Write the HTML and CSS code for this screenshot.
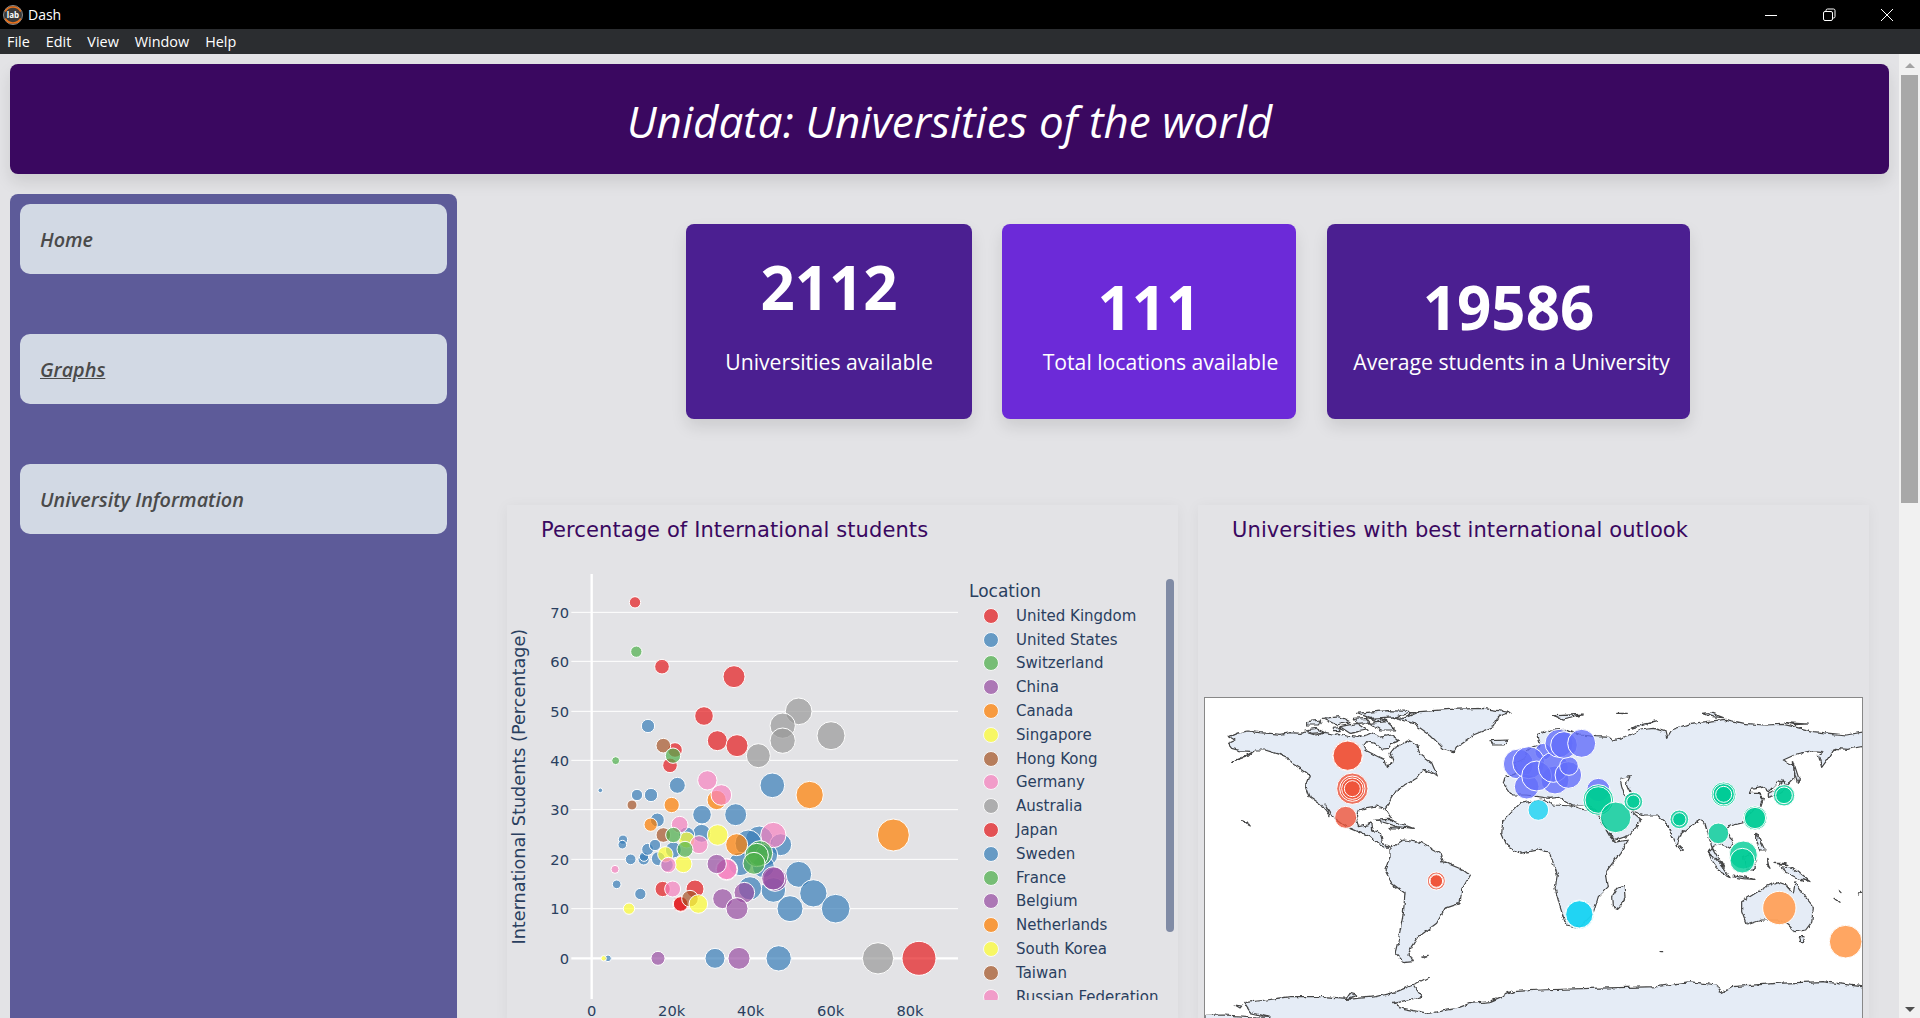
FILE: index.html
```html
<!DOCTYPE html>
<html lang="en">
<head>
    <meta charset="UTF-8">
    <meta name="viewport" content="width=device-width, initial-scale=1.0">
    <title>Dash</title>
    <link rel="stylesheet" href="styles.css">
</head>
<body>

    <div class="titleBar">
        <svg class="appLogo" width="20" height="20" viewBox="0 0 20 20">
            <circle cx="10" cy="10" r="9.5" fill="#3a3a3a" stroke="#8a8a8a"/>
            <path d="M2.2 6.5a9 9 0 0 1 15.6 0" fill="none" stroke="#e8701a" stroke-width="1.6"/>
            <path d="M2.2 13.5a9 9 0 0 0 15.6 0" fill="none" stroke="#e8701a" stroke-width="1.6"/>
            <text class="appLogoText" x="10" y="12.5">lab</text>
        </svg>
        <span class="appName">Dash</span>
        <div class="windowButtons">
            <svg width="14" height="14" viewBox="0 0 14 14"><path d="M1 7.5h12" stroke="#fff" fill="none"/></svg>
            <svg width="14" height="14" viewBox="0 0 14 14"><rect x="1.5" y="3.5" width="9" height="9" rx="1.5" stroke="#fff" fill="none"/><path d="M4 3.5v-1a1.5 1.5 0 0 1 1.5-1.5h6a1.5 1.5 0 0 1 1.5 1.5v6a1.5 1.5 0 0 1-1.5 1.5h-1" stroke="#fff" fill="none"/></svg>
            <svg width="14" height="14" viewBox="0 0 14 14"><path d="M1 1l12 12M13 1L1 13" stroke="#fff" fill="none"/></svg>
        </div>
    </div>

    <div class="menuBar">
        <span>File</span><span>Edit</span><span>View</span><span>Window</span><span>Help</span>
    </div>

    <div class="pageArea">
        <div class="page">
            <header class="pageHeader">
                <h1>Unidata: Universities of the world</h1>
            </header>

            <div class="pageBody">
                <nav class="sideBar">
                    <a class="navItem">Home</a>
                    <a class="navItem navItemActive">Graphs</a>
                    <a class="navItem">University Information</a>
                </nav>

                <main class="content">
                    <div class="statRow">
                        <div class="statCard statCardFirst">
                            <div class="statNumber statNumberRaised">2112</div>
                            <div class="statLabel">Universities available</div>
                        </div>
                        <div class="statCard statCardBright statCardSecond">
                            <div class="statNumber">111</div>
                            <div class="statLabel statLabelShifted">Total locations available</div>
                        </div>
                        <div class="statCard statCardThird">
                            <div class="statNumber">19586</div>
                            <div class="statLabel statLabelNudged">Average students in a University</div>
                        </div>
                    </div>

                    <div class="chartRow">
                        <section class="chartPanel">
                            <h3 class="chartTitle">Percentage of International students</h3>
                            <div class="scatterBody">
                                <svg class="scatter" width="453" height="463" viewBox="21 165 1359 1389">
                                    <g class="grid">
                                        <path d="M214 337H1374M214 484H1374M214 634H1374M214 781H1374M214 929H1374M214 1078H1374M214 1226H1374"/>
                                        <path class="zeroLine" d="M214 1375H1374M275 222V1497"/>
                                    </g>
                                    <g class="ticks">
                                        <text class="tickY" x="207" y="353">70</text>
                                        <text class="tickY" x="207" y="500">60</text>
                                        <text class="tickY" x="207" y="650">50</text>
                                        <text class="tickY" x="207" y="797">40</text>
                                        <text class="tickY" x="207" y="945">30</text>
                                        <text class="tickY" x="207" y="1094">20</text>
                                        <text class="tickY" x="207" y="1242">10</text>
                                        <text class="tickY" x="207" y="1391">0</text>
                                        <text class="tickX" x="275" y="1547">0</text>
                                        <text class="tickX" x="515" y="1547">20k</text>
                                        <text class="tickX" x="752" y="1547">40k</text>
                                        <text class="tickX" x="992" y="1547">60k</text>
                                        <text class="tickX" x="1230" y="1547">80k</text>
                                    </g>
                                    <text class="axisTitle" transform="translate(75 860) rotate(-90)">International Students (Percentage)</text>

                                    <g class="dots dotBlue">
                                        <circle cx="444" cy="678" r="20"/><circle cx="301" cy="871" r="7"/><circle cx="411" cy="885" r="17"/><circle cx="453" cy="885" r="20"/>
                                        <circle cx="532" cy="856" r="24"/><circle cx="817" cy="856" r="37"/><circle cx="472" cy="960" r="21"/><circle cx="606" cy="944" r="28"/>
                                        <circle cx="707" cy="944" r="33"/><circle cx="369" cy="1019" r="14"/><circle cx="367" cy="1034" r="13"/><circle cx="392" cy="1078" r="16"/>
                                        <circle cx="431" cy="1078" r="17"/><circle cx="432" cy="1070" r="14"/><circle cx="443" cy="1048" r="18"/><circle cx="465" cy="1035" r="17"/>
                                        <circle cx="475" cy="1076" r="21"/><circle cx="350" cy="1153" r="13"/><circle cx="421" cy="1182" r="17"/><circle cx="605" cy="1000" r="27"/>
                                        <circle cx="520" cy="1050" r="24"/><circle cx="560" cy="1005" r="24"/><circle cx="778" cy="1020" r="42"/><circle cx="745" cy="1030" r="40"/>
                                        <circle cx="842" cy="1034" r="33"/><circle cx="800" cy="1065" r="33"/><circle cx="720" cy="1092" r="35"/><circle cx="790" cy="1100" r="33"/>
                                        <circle cx="896" cy="1123" r="39"/><circle cx="940" cy="1180" r="41"/><circle cx="870" cy="1226" r="39"/><circle cx="1007" cy="1226" r="43"/>
                                        <circle cx="820" cy="1170" r="37"/><circle cx="750" cy="1165" r="35"/><circle cx="645" cy="1375" r="30"/><circle cx="836" cy="1375" r="38"/>
                                        <circle cx="324" cy="1375" r="10"/><circle cx="500" cy="1095" r="20"/>
                                    </g>
                                    <g class="dots dotGray">
                                        <circle cx="896" cy="634" r="40"/><circle cx="848" cy="677" r="38"/><circle cx="848" cy="722" r="38"/><circle cx="993" cy="707" r="42"/>
                                        <circle cx="775" cy="767" r="36"/><circle cx="1134" cy="1375" r="47"/>
                                    </g>
                                    <g class="dots dotRed">
                                        <circle cx="405" cy="307" r="17"/><circle cx="486" cy="500" r="22"/><circle cx="702" cy="530" r="33"/><circle cx="612" cy="648" r="28"/>
                                        <circle cx="652" cy="722" r="30"/><circle cx="711" cy="737" r="33"/><circle cx="525" cy="750" r="22"/><circle cx="510" cy="796" r="22"/>
                                        <circle cx="488" cy="1167" r="23"/><circle cx="585" cy="1167" r="27"/><circle cx="542" cy="1212" r="24"/><circle cx="542" cy="1212" r="22"/>
                                        <circle cx="1257" cy="1375" r="51"/>
                                    </g>
                                    <g class="dots dotOrange">
                                        <circle cx="929" cy="885" r="41"/><circle cx="1180" cy="1005" r="48"/><circle cx="650" cy="900" r="29"/><circle cx="515" cy="915" r="23"/>
                                        <circle cx="452" cy="974" r="20"/><circle cx="710" cy="1034" r="33"/>
                                    </g>
                                    <g class="dots dotBrown">
                                        <circle cx="490" cy="737" r="22"/><circle cx="396" cy="915" r="15"/><circle cx="490" cy="1005" r="22"/><circle cx="570" cy="1196" r="25"/>
                                    </g>
                                    <g class="dots dotYellow">
                                        <circle cx="653" cy="1005" r="31"/><circle cx="550" cy="1092" r="26"/><circle cx="496" cy="1063" r="23"/><circle cx="560" cy="1020" r="24"/>
                                        <circle cx="387" cy="1226" r="17"/><circle cx="595" cy="1212" r="28"/><circle cx="311" cy="1375" r="8"/>
                                    </g>
                                    <g class="dots dotPink">
                                        <circle cx="622" cy="841" r="29"/><circle cx="664" cy="885" r="31"/><circle cx="539" cy="974" r="25"/><circle cx="597" cy="1034" r="27"/>
                                        <circle cx="820" cy="1005" r="38"/><circle cx="345" cy="1108" r="12"/><circle cx="505" cy="1095" r="23"/><circle cx="518" cy="1167" r="24"/>
                                        <circle cx="680" cy="1108" r="33"/><circle cx="680" cy="1108" r="31"/>
                                    </g>
                                    <g class="dots dotPurple">
                                        <circle cx="474" cy="1375" r="21"/><circle cx="717" cy="1375" r="33"/><circle cx="650" cy="1092" r="29"/><circle cx="668" cy="1196" r="30"/>
                                        <circle cx="733" cy="1178" r="31"/><circle cx="711" cy="1226" r="33"/><circle cx="825" cy="1138" r="36"/><circle cx="820" cy="1135" r="35"/>
                                    </g>
                                    <g class="dots dotGreen">
                                        <circle cx="409" cy="455" r="17"/><circle cx="347" cy="782" r="12"/><circle cx="519" cy="767" r="23"/><circle cx="520" cy="1005" r="23"/>
                                        <circle cx="555" cy="1048" r="24"/><circle cx="780" cy="1060" r="38"/><circle cx="770" cy="1065" r="35"/><circle cx="762" cy="1090" r="33"/>
                                    </g>
                                </svg>
                                <div class="legend">
                                    <div class="legendTitle">Location</div>
                                    <ul class="legendList">
                                        <li><i class="swatch dotRed"></i>United Kingdom</li>
                                        <li><i class="swatch dotBlue"></i>United States</li>
                                        <li><i class="swatch dotGreen"></i>Switzerland</li>
                                        <li><i class="swatch dotPurple"></i>China</li>
                                        <li><i class="swatch dotOrange"></i>Canada</li>
                                        <li><i class="swatch dotYellow"></i>Singapore</li>
                                        <li><i class="swatch dotBrown"></i>Hong Kong</li>
                                        <li><i class="swatch dotPink"></i>Germany</li>
                                        <li><i class="swatch dotGray"></i>Australia</li>
                                        <li><i class="swatch dotRed"></i>Japan</li>
                                        <li><i class="swatch dotBlue"></i>Sweden</li>
                                        <li><i class="swatch dotGreen"></i>France</li>
                                        <li><i class="swatch dotPurple"></i>Belgium</li>
                                        <li><i class="swatch dotOrange"></i>Netherlands</li>
                                        <li><i class="swatch dotYellow"></i>South Korea</li>
                                        <li><i class="swatch dotBrown"></i>Taiwan</li>
                                        <li><i class="swatch dotPink"></i>Russian Federation</li>
                                    </ul>
                                    <div class="legendScroll"></div>
                                </div>
                            </div>
                        </section>

                        <section class="chartPanel chartPanelMap">
                            <h3 class="chartTitle">Universities with best international outlook</h3>
                            <div class="mapFrame">
                                <svg class="map" width="657" height="320" viewBox="45 54 1971 960">
                                    <defs>
                                        <filter id="rough" x="-5%" y="-5%" width="110%" height="110%">
                                            <feTurbulence type="fractalNoise" baseFrequency="0.05" numOctaves="3" seed="4"/>
                                            <feDisplacementMap in="SourceGraphic" scale="14" xChannelSelector="R" yChannelSelector="G"/>
                                        </filter>
                                    </defs>
                                    <g filter="url(#rough)">
                                    <g class="land">
                                        <!-- americas -->
                                        <path d="M118 170L140 160 175 153 205 158 240 160 270 163 300 158 335 160 345 156 375 165 400 160 430 165 445 160 470 168 500 172 530 165 545 158 570 172 600 165 625 182 605 190 595 205 575 207 555 190 530 185 522 195 530 212 560 228 585 240 592 262 610 245 600 220 612 205 640 190 655 180 680 195 690 222 725 248 742 288 715 275 700 268 680 295 640 318 620 330 605 355 585 385 605 415 585 385 560 378 530 383 505 390 497 415 505 440 530 435 545 428 548 450 570 458 578 490 600 500 585 503 570 495 540 470 505 455 470 440 430 412 405 372 420 410 395 375 360 350 347 315 358 285 335 268 305 250 295 235 265 222 225 210 195 210 175 228 125 245 165 228 190 215 150 212 125 205 113 190 135 180Z"/>
                                        <path d="M600 505L640 480 695 488 750 520 760 545 820 570 840 585 815 630 810 670 765 685 740 730 700 760 680 775 655 815 670 845 640 848 615 820 625 780 640 700 645 640 605 610 585 570 600 530Z"/>
                                        <path d="M600 110L640 115 690 95 780 88 880 85 960 97 925 110 910 140 850 165 800 200 790 215 760 205 720 165 670 130Z"/>
                                        <path d="M350 125L395 120 385 135 350 135ZM400 115L450 110 480 125 440 135ZM500 100L590 92 680 95 620 110 540 115ZM540 130L590 125 620 150 570 150ZM450 140L500 130 530 150 480 160ZM345 150L380 145 405 157 365 160ZM490 118L530 115 540 128 500 130ZM545 118L570 115 590 122 560 126ZM430 145L455 142 450 152 432 152Z"/>
                                        <path d="M555 420L600 418 635 432 670 445 620 440ZM600 442L625 441 625 447 605 447ZM155 422L173 428 181 438 166 430ZM135 975L155 978 150 984ZM695 828L715 826 705 832Z"/>
                                        <path d="M900 182L955 180 945 195 910 195ZM1090 108L1180 102 1120 120Z"/>
                                        <!-- antarctica -->
                                        <path d="M45 1006L100 1005 180 1010 240 1012 180 998 160 968 230 960 300 950 400 950 470 955 480 940 500 945 470 958 560 950 620 935 680 910 715 892 670 915 695 950 610 970 640 985 715 1000 800 985 840 970 900 965 970 935 1050 930 1200 925 1400 920 1500 905 1580 915 1595 940 1630 920 1760 910 1900 905 2050 925 2150 935 2150 1030 45 1030Z"/>
                                    </g>
                                    <g class="land" transform="translate(1020 0)">
                                        <!-- africa -->
                                        <path d="M-85 460L-82 425-30 370 30 360 60 365 70 375 130 378 165 390 190 388 205 410 240 470 255 487 295 480 270 520 228 575 235 620 205 650 190 700 150 742 108 735 90 680 75 625 82 585 60 520 30 508-30 520-70 495Z"/>
                                        <!-- eurasia -->
                                        <path d="M-55 345L-80 310-75 290-40 280-45 250-15 235-5 205 30 195 20 165 60 150 110 148 150 165 200 170 240 172 250 180 285 170 300 165 330 150 370 145 405 155 410 175 425 150 480 130 530 125 585 118 640 130 700 135 760 133 790 140 850 155 900 160 950 165 1005 155 1005 198 950 208 915 205 895 235 875 262 865 225 880 215 850 212 800 222 760 240 790 255 795 290 770 315 745 305 715 335 695 320 665 325 658 340 685 340 700 355 690 385 675 385 640 425 600 435 590 450 610 490 600 505 575 490 555 495 535 515 580 560 545 500 525 430 510 420 480 440 455 460 440 500 410 430 385 405 340 405 300 390 335 420 300 465 252 482 225 440 205 400 175 375 125 375 85 352 60 355-15 345Z"/>
                                        <!-- islands -->
                                        <path d="M250 680L248 650 263 625 285 615 288 650 273 675 263 685ZM450 497L460 507 455 512 448 505ZM790 245L808 300 803 310 793 275ZM715 340L745 325 760 300 768 325 733 350 715 355ZM680 460L690 480 705 510 690 510 680 485Z"/>
                                        <path d="M535 515L570 550 600 590 570 575 545 540ZM610 585L640 590 675 598 640 596 610 591ZM640 530L660 520 680 540 670 570 650 570ZM710 535L715 555 720 565 710 555ZM735 550L760 550 775 555ZM750 560L790 565 840 605 800 595 770 580Z"/>
                                        <path d="M635 665L700 625 740 605 770 615 790 640 795 605 825 650 850 680 845 730 830 750 795 755 775 735 745 720 695 720 650 735 635 695ZM805 770L825 770 820 785 810 785Z"/>
                                        <path d="M295 150L335 130 385 122 350 132 315 144ZM70 107L160 105 100 120ZM260 100L292 100 277 104ZM515 100L540 98 580 113 545 110ZM765 128L800 130 835 132 795 134Z"/>
                                        <path d="M925 630L933 638ZM912 655L927 667ZM985 642L995 637ZM390 815L398 815Z"/>
                                    </g>
                                    <g class="lake" transform="translate(1020 0)">
                                        <path d="M270 295L300 290 290 310 305 345 285 350 275 320Z"/>
                                    </g>
                                    </g>

                                    <g class="bubbles bubbleBlue">
                                        <circle cx="1225" cy="330" r="35"/><circle cx="1060" cy="215" r="25"/><circle cx="985" cy="252" r="45"/><circle cx="1010" cy="320" r="37"/>
                                        <circle cx="1016" cy="248" r="48"/><circle cx="1095" cy="300" r="42"/><circle cx="1040" cy="288" r="45"/><circle cx="1090" cy="262" r="45"/>
                                        <circle cx="1135" cy="285" r="40"/><circle cx="1137" cy="258" r="28"/><circle cx="1107" cy="190" r="42"/><circle cx="1122" cy="195" r="40"/>
                                        <circle cx="1175" cy="190" r="42"/>
                                    </g>
                                    <g class="bubbles bubbleRed">
                                        <circle cx="473" cy="227" r="46"/><circle cx="473" cy="227" r="44"/><circle cx="487" cy="326" r="47"/><circle cx="487" cy="326" r="38"/>
                                        <circle cx="487" cy="326" r="32"/><circle cx="487" cy="326" r="24"/><circle cx="739" cy="603" r="27"/><circle cx="739" cy="603" r="21"/>
                                        <circle cx="739" cy="603" r="19"/><circle cx="467" cy="412" r="33"/>
                                    </g>
                                    <g class="bubbles bubbleCyan">
                                        <circle cx="1045" cy="390" r="31"/><circle cx="1168" cy="703" r="43"/><circle cx="1168" cy="703" r="41"/>
                                    </g>
                                    <g class="bubbles bubbleGreen" transform="translate(1020 0)">
                                        <circle cx="205" cy="360" r="46"/><circle cx="205" cy="360" r="40"/><circle cx="257" cy="412" r="46"/><circle cx="310" cy="365" r="28"/>
                                        <circle cx="310" cy="365" r="20"/><circle cx="448" cy="418" r="28"/><circle cx="448" cy="418" r="20"/><circle cx="581" cy="343" r="37"/>
                                        <circle cx="581" cy="343" r="32"/><circle cx="581" cy="343" r="24"/><circle cx="565" cy="460" r="31"/><circle cx="675" cy="414" r="36"/>
                                        <circle cx="675" cy="414" r="32"/><circle cx="762" cy="346" r="32"/><circle cx="762" cy="346" r="25"/><circle cx="640" cy="525" r="42"/>
                                        <circle cx="637" cy="542" r="37"/>
                                    </g>
                                    <g class="bubbles bubbleOrange" transform="translate(1020 0)">
                                        <circle cx="748" cy="684" r="50"/><circle cx="947" cy="785" r="49"/>
                                    </g>
                                </svg>
                            </div>
                        </section>
                    </div>
                </main>
            </div>
        </div>

        <div class="scrollBar">
            <i class="arrowUp"></i>
            <div class="scrollThumb"></div>
            <i class="arrowDown"></i>
        </div>
    </div>

</body>
</html>
```

FILE: styles.css
```css
* {
    box-sizing: border-box;
}

html, body {
    height: 100%;
}

body {
    font-family: 'Open Sans', 'Noto Sans', sans-serif;
    margin: 0;
    padding: 0;
    background-color: #E3E3E6;
    overflow: hidden;
    display: flex;
    flex-direction: column;
}

/* Barra da janela */
.titleBar {
    height: 29px;
    flex: none;
    background-color: #000;
    color: #fff;
    display: flex;
    align-items: center;
    padding-left: 3px;
    font-size: 14px;
}

.appLogo {
    margin-right: 5px;
}

.appLogoText {
    font-family: 'Open Sans', sans-serif;
    font-size: 8px;
    font-weight: 700;
    fill: #fff;
    text-anchor: middle;
}

.windowButtons {
    margin-left: auto;
    display: flex;
    gap: 44px;
    padding-right: 26px;
}

.menuBar {
    height: 25px;
    flex: none;
    background-color: #2B2D30;
    color: #fff;
    display: flex;
    align-items: center;
    gap: 16px;
    padding-left: 7px;
    font-size: 14.4px;
}

.pageArea {
    flex: 1;
    min-height: 0;
    display: flex;
}

.page {
    flex: 1;
    min-width: 0;
    display: flex;
    flex-direction: column;
    padding: 10px 10px 0 10px;
    overflow: hidden;
}

.pageHeader {
    height: 110px;
    flex: none;
    background-color: #3A0860;
    border-radius: 8px;
    box-shadow: 0 8px 16px rgba(0, 0, 0, 0.1);
    color: #fff;
    display: flex;
    align-items: center;
    justify-content: center;
}

.pageHeader h1 {
    margin: 4px 0 0 0;
    font-size: 44px;
    font-weight: 400;
    font-style: italic;
}

.pageBody {
    flex: 1;
    min-height: 0;
    display: flex;
    margin-top: 20px;
}

.sideBar {
    width: 447px;
    flex: none;
    background-color: #5D5B99;
    border-radius: 8px 8px 0 0;
    padding: 10px;
    display: flex;
    flex-direction: column;
    gap: 60px;
}

.navItem {
    height: 70px;
    background-color: #D2D9E4;
    border-radius: 10px;
    color: #4A4A4A;
    font-size: 19.8px;
    font-style: italic;
    font-weight: 600;
    display: flex;
    align-items: center;
    padding-left: 20px;
}

.navItemActive {
    text-decoration: underline;
}

.content {
    flex: 1;
    min-width: 0;
    padding: 30px 19px 0 50px;
}

.statRow {
    display: flex;
    justify-content: center;
    gap: 30px;
    padding-right: 1px;
}

.statCard {
    height: 195px;
    background-color: #4B1F91;
    border-radius: 8px;
    box-shadow: 0 8px 16px rgba(0, 0, 0, 0.1);
    color: #fff;
    text-align: center;
    display: flex;
    flex-direction: column;
    align-items: center;
    padding-top: 30px;
}

.statCardFirst {
    width: 286px;
}

.statCardSecond {
    width: 294px;
}

.statCardThird {
    width: 363px;
    margin-left: 1px;
}

.statCardBright {
    background-color: #6C2AD8;
}

.statNumber {
    font-size: 60px;
    font-weight: 700;
    line-height: 80px;
    margin-top: 13px;
}

.statNumberRaised {
    margin-top: -7px;
    margin-bottom: 20px;
}

.statLabel {
    font-size: 21.2px;
    line-height: 30px;
    white-space: nowrap;
}

.statLabelShifted {
    margin-left: 23px;
}

.statLabelNudged {
    margin-left: 6px;
}

.chartRow {
    display: flex;
    gap: 20px;
    margin-top: 86px;
}

.chartPanel {
    width: 671px;
    height: 520px;
    flex: none;
    background-color: #E3E3E6;
    box-shadow: 0 2px 14px rgba(0, 0, 0, 0.05);
    padding-top: 13px;
}

.chartTitle {
    margin: 0 0 0 34px;
    height: 37px;
    font-family: 'DejaVu Sans', sans-serif;
    font-size: 21px;
    font-weight: 400;
    letter-spacing: 0.1px;
    line-height: 24px;
    color: #3A0860;
    white-space: nowrap;
}

.scatterBody {
    display: flex;
}

.scatter {
    flex: none;
}

.grid path {
    stroke: #fff;
    stroke-width: 3;
    fill: none;
}

.grid .zeroLine {
    stroke-width: 7;
}

.ticks text,
.axisTitle {
    font-family: 'DejaVu Sans', sans-serif;
    fill: #2A3F5F;
}

.ticks text {
    font-size: 44px;
}

.tickY {
    text-anchor: end;
}

.tickX {
    text-anchor: middle;
}

.axisTitle {
    font-size: 53px;
    text-anchor: middle;
}

.dots circle {
    stroke: #fff;
    stroke-width: 3;
    fill-opacity: 0.7;
}

.dots.dotRed circle { fill: #E41A1C; }
.dots.dotBlue circle { fill: #377EB8; }
.dots.dotGreen circle { fill: #4DAF4A; }
.dots.dotPurple circle { fill: #984EA3; }
.dots.dotOrange circle { fill: #FF7F00; }
.dots.dotYellow circle { fill: #FFFF33; }
.dots.dotBrown circle { fill: #A65628; }
.dots.dotPink circle { fill: #F781BF; }
.dots.dotGray circle { fill: #999999; }

.legend {
    flex: 1;
    position: relative;
    font-family: 'DejaVu Sans', sans-serif;
    color: #2A3F5F;
    margin-top: 0;
}

.legendTitle {
    font-size: 17px;
    line-height: 20px;
    margin-top: 26px;
    margin-left: 9px;
}

.legendList {
    list-style: none;
    margin: 3px 0 0 0;
    padding: 0;
    height: 396px;
    overflow: hidden;
}

.legendList li {
    height: 23.8px;
    display: flex;
    align-items: center;
    font-size: 15px;
    white-space: nowrap;
}

.swatch {
    width: 16px;
    height: 16px;
    flex: none;
    border-radius: 50%;
    border: 1.5px solid #fff;
    margin: 0 17px 0 23px;
    opacity: 0.72;
}

.swatch.dotRed { background-color: #E41A1C; }
.swatch.dotBlue { background-color: #377EB8; }
.swatch.dotGreen { background-color: #4DAF4A; }
.swatch.dotPurple { background-color: #984EA3; }
.swatch.dotOrange { background-color: #FF7F00; }
.swatch.dotYellow { background-color: #FFFF33; }
.swatch.dotBrown { background-color: #A65628; }
.swatch.dotPink { background-color: #F781BF; }
.swatch.dotGray { background-color: #999999; }

.legendScroll {
    position: absolute;
    top: 24px;
    right: 4px;
    width: 8px;
    height: 353px;
    border-radius: 4px;
    background-color: #808BA5;
}

.chartPanelMap .chartTitle {
    height: 179px;
}

.mapFrame {
    margin-left: 6px;
    width: 659px;
    height: 340px;
    border: 1px solid #888;
    background-color: #fff;
}

.map {
    display: block;
}

.land path {
    fill: #E5ECF6;
    stroke: #444;
    stroke-width: 3.6;
    stroke-linejoin: round;
}

.lake path {
    fill: #fff;
    stroke: #444;
    stroke-width: 3.6;
}

.bubbles circle {
    stroke: #fff;
    stroke-width: 3;
    fill-opacity: 0.8;
}

.bubbleBlue circle { fill: #636EFA; }
.bubbleRed circle { fill: #EF553B; }
.bubbleCyan circle { fill: #19D3F3; }
.bubbleGreen circle { fill: #00CC96; }
.bubbleOrange circle { fill: #FFA15A; fill-opacity: 0.95; }

/* Barra de rolagem da pagina */
.scrollBar {
    width: 21px;
    flex: none;
    background-color: #F1F1F1;
    position: relative;
    display: flex;
    flex-direction: column;
    align-items: center;
}

.scrollThumb {
    width: 17px;
    height: 428px;
    background-color: #A8A8A8;
    margin-top: 7px;
}

.arrowUp {
    margin-top: 9px;
    border-left: 5px solid transparent;
    border-right: 5px solid transparent;
    border-bottom: 5px solid #A3A3A3;
}

.arrowDown {
    margin-top: auto;
    margin-bottom: 6px;
    border-left: 5px solid transparent;
    border-right: 5px solid transparent;
    border-top: 5px solid #505050;
}
```
